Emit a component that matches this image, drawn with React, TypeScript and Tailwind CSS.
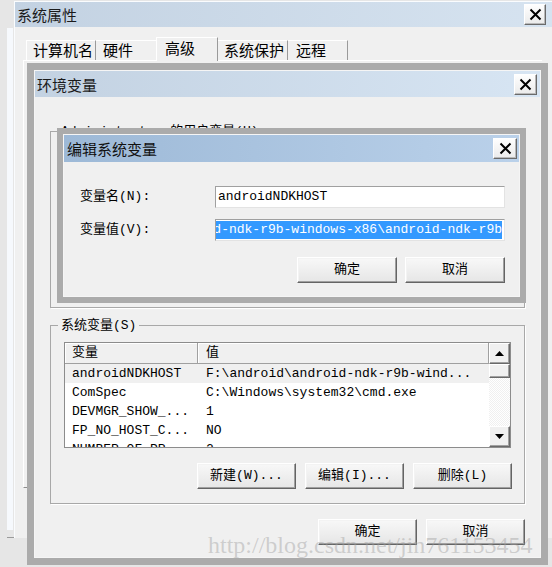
import React from 'react';

const mono = "font-['Liberation_Mono','Noto_Sans_CJK_SC',monospace]";

interface Row {
  name: string;
  value: string;
  selected?: boolean;
}

const systemVars: Row[] = [
  { name: 'androidNDKHOST', value: 'F:\\android\\android-ndk-r9b-wind...', selected: true },
  { name: 'ComSpec', value: 'C:\\Windows\\system32\\cmd.exe' },
  { name: 'DEVMGR_SHOW_...', value: '1' },
  { name: 'FP_NO_HOST_C...', value: 'NO' },
  { name: 'NUMBER_OF_PR...', value: '2' },
];

const CloseButton: React.FC<{ className?: string }> = ({ className = '' }) => (
  <div
    className={`h-[21px] flex items-center justify-center bg-gradient-to-b from-[#fefefe] to-[#ebebeb] border border-t-[#ffffff] border-l-[#ffffff] border-r-[#6a6a6a] border-b-[#6a6a6a] shadow-[inset_-1px_-1px_0_#b9b9b9] ${className}`}
  >
    <svg width="13" height="13" viewBox="0 0 13 13">
      <path d="M1.5 1.5L11.5 11.5M11.5 1.5L1.5 11.5" stroke="#000" strokeWidth="2" />
    </svg>
  </div>
);

const WinButton: React.FC<{ label: string; className?: string }> = ({ label, className = '' }) => (
  <button
    className={`h-[26px] flex items-center justify-center bg-gradient-to-b from-[#f8f8f8] to-[#e6e6e6] border border-t-[#ffffff] border-l-[#ffffff] border-r-[#646464] border-b-[#646464] shadow-[inset_-1px_-1px_0_#a0a0a0,inset_1px_1px_0_#f3f3f3] text-[13px] text-black ${mono} ${className}`}
  >
    {label}
  </button>
);

const ArrowButton: React.FC<{ up?: boolean }> = ({ up }) => (
  <div className="h-[21px] shrink-0 flex items-center justify-center bg-[#f0f0f0] border border-t-[#ffffff] border-l-[#ffffff] border-r-[#696969] border-b-[#696969] shadow-[inset_-1px_-1px_0_#a0a0a0]">
    <svg width="9" height="5" viewBox="0 0 9 5">
      {up ? <path d="M0 5L4.5 0L9 5Z" fill="#000" /> : <path d="M0 0L4.5 5L9 0Z" fill="#000" />}
    </svg>
  </div>
);

const SystemProperties = () => (
  <div className="absolute left-[14px] top-[1px] w-[538px] h-[537px] flex flex-col bg-[#f0f0f0] border-l border-t border-[#fafcfe] font-['Noto_Sans_CJK_SC',sans-serif]">
    <div className="h-[25px] shrink-0 flex items-center bg-gradient-to-r from-[#c3d2e2] to-[#d6e3f0] pl-[2px]">
      <span className="text-[15px] leading-none text-[#1b1b1b]">系统属性</span>
      <CloseButton className="ml-auto mr-[6px] w-[22px]" />
    </div>
    <div className="mt-[10px] pl-[11px] flex items-end h-[23px] text-[15px] text-black relative z-10">
      <div className="w-[70px] h-[20px] pl-[6px] flex items-center border-t border-l border-r border-t-[#ffffff] border-l-[#ffffff] border-r-[#9a9a9a] bg-[#f0f0f0]">计算机名</div>
      <div className="w-[62px] h-[20px] pl-[7px] flex items-center border-t border-t-[#ffffff] bg-[#f0f0f0]">硬件</div>
      <div className="w-[62px] h-[24px] -mx-[2px] -mb-px pl-[8px] pb-[3px] flex items-center border-t border-l border-r border-t-[#ffffff] border-l-[#ffffff] border-r-[#9a9a9a] bg-[#f0f0f0] relative">高级</div>
      <div className="w-[72px] h-[20px] pl-[8px] flex items-center border-t border-r border-t-[#ffffff] border-r-[#9a9a9a] bg-[#f0f0f0]">系统保护</div>
      <div className="w-[60px] h-[20px] pl-[8px] flex items-center border-t border-r border-t-[#ffffff] border-r-[#9a9a9a] bg-[#f0f0f0]">远程</div>
    </div>
    <div className="ml-[8px] mr-[10px] h-[428px] border-l border-t border-b border-l-[#ffffff] border-t-[#ffffff] border-b-[#8e8e8e]" />
  </div>
);

const SystemList = () => (
  <div className={`h-[106px] flex border border-[#8c8c8c] bg-white text-[13px] text-black ${mono}`}>
    <div className="flex-1 flex flex-col overflow-hidden">
      <div className="h-[21px] shrink-0 flex bg-[#f0f0f0]">
        <div className="w-[133px] pl-[7px] flex items-center border-r border-b border-[#a0a0a0] shadow-[inset_1px_1px_0_#ffffff]">变量</div>
        <div className="flex-1 pl-[8px] flex items-center border-r border-b border-[#a0a0a0] shadow-[inset_1px_1px_0_#ffffff]">值</div>
      </div>
      {systemVars.map((row) => (
        <div key={row.name} className={`h-[19px] shrink-0 flex items-center whitespace-nowrap ${row.selected ? 'bg-[#f0f0f0]' : ''}`}>
          <span className="w-[133px] pl-[7px]">{row.name}</span>
          <span className="pl-[8px]">{row.value}</span>
        </div>
      ))}
    </div>
    <div className="w-[21px] flex flex-col">
      <ArrowButton up />
      <div className="h-[14px] shrink-0 bg-[#f0f0f0] border border-t-[#ffffff] border-l-[#ffffff] border-r-[#696969] border-b-[#696969] shadow-[inset_-1px_-1px_0_#a0a0a0]" />
      <div className="flex-1 bg-[repeating-conic-gradient(#f0f0f0_0_25%,#ffffff_0_50%)] bg-[length:2px_2px]" />
      <ArrowButton />
    </div>
  </div>
);

const EnvWindow = () => (
  <div className="absolute left-[27px] top-[63px] w-[521px] h-[502px] bg-[#ababab] p-[7px]">
    <div className="h-full flex flex-col border border-[#f5f5f5] bg-[#f0f0f0]">
      <div className="h-[26px] shrink-0 flex items-center bg-gradient-to-r from-[#c3d2e2] to-[#d7e5f3] pl-[2px] font-['Noto_Sans_CJK_SC',sans-serif]">
        <span className="text-[15px] leading-none text-[#1b1b1b]">环境变量</span>
        <CloseButton className="ml-auto mr-[3px] w-[23px]" />
      </div>
      <div className={`flex-1 flex flex-col px-[15px] text-[13px] text-black ${mono}`}>
        <fieldset className="mt-[26px] h-[185px] border border-[#a8a8a8] shadow-[1px_1px_0_#ffffff]">
          <legend className="ml-[7px] px-[3px] leading-[17px]">Administrator 的用户变量(U)</legend>
        </fieldset>
        <fieldset className="mt-[9px] border border-[#a8a8a8] shadow-[1px_1px_0_#ffffff]">
          <legend className="ml-[7px] px-[3px] leading-[17px]">系统变量(S)</legend>
          <div className="px-[13px] pt-[8px] pb-[14px]">
            <SystemList />
            <div className="mt-[15px] flex justify-end gap-[9px] -mr-px">
              <WinButton label="新建(W)..." className="w-[99px]" />
              <WinButton label="编辑(I)..." className="w-[99px]" />
              <WinButton label="删除(L)" className="w-[99px]" />
            </div>
          </div>
        </fieldset>
        <div className="mt-[15px] flex justify-end gap-[9px]">
          <WinButton label="确定" className="w-[99px]" />
          <WinButton label="取消" className="w-[99px]" />
        </div>
      </div>
    </div>
  </div>
);

const EditWindow = () => (
  <div className="absolute left-[57px] top-[128px] w-[469px] h-[175px] bg-[#ababab] p-[6px]">
    <div className="h-full flex flex-col border border-[#f5f5f5] bg-[#f0f0f0]">
      <div className="h-[27px] shrink-0 flex items-center bg-gradient-to-r from-[#9db9d7] to-[#bad1ea] pl-[3px] font-['Noto_Sans_CJK_SC',sans-serif]">
        <span className="text-[15px] leading-none text-[#111]">编辑系统变量</span>
        <CloseButton className="ml-auto mr-[2px] w-[24px]" />
      </div>
      <div className={`flex-1 flex flex-col pl-[16px] pr-[14px] pt-[24px] text-[13px] text-black ${mono}`}>
        <div className="h-[22px] flex items-center">
          <span className="flex-1">变量名(N):</span>
          <div className="w-[290px] h-[22px] flex items-center pl-[2px] bg-white border border-t-[#a0a0a0] border-l-[#a0a0a0] border-r-[#e3e3e3] border-b-[#e3e3e3] whitespace-nowrap">
            androidNDKHOST
          </div>
        </div>
        <div className="h-[22px] mt-[11px] flex items-center">
          <span className="flex-1">变量值(V):</span>
          <div className="w-[290px] h-[22px] flex items-center justify-end overflow-hidden pr-[2px] bg-white border border-t-[#a0a0a0] border-l-[#a0a0a0] border-r-[#e3e3e3] border-b-[#e3e3e3]">
            <span className="shrink-0 whitespace-nowrap leading-[18px] bg-[#3399ff] text-white">
              F:\android\android-ndk-r9b-windows-x86\android-ndk-r9b
            </span>
          </div>
        </div>
        <div className="mt-[16px] flex justify-end gap-[8px]">
          <WinButton label="确定" className="w-[100px]" />
          <WinButton label="取消" className="w-[100px]" />
        </div>
      </div>
    </div>
  </div>
);

export default function App() {
  return (
    <div className="relative w-[552px] h-[567px] overflow-hidden bg-[#e6e6e6]">
      <div className="absolute left-[7px] top-[28px] w-[6px] h-[502px] bg-[#f6f9fd]" />
      <div className="absolute left-[7px] top-[537px] w-[21px] h-px bg-[#9a9a9a]" />
      <SystemProperties />
      <EnvWindow />
      <EditWindow />
      <div className="absolute left-[208px] top-[533px] text-[24px] leading-none whitespace-nowrap text-[rgba(160,160,160,0.45)] font-['Liberation_Serif',serif] pointer-events-none">
        http://blog.csdn.net/jin761153454
      </div>
    </div>
  );
}
